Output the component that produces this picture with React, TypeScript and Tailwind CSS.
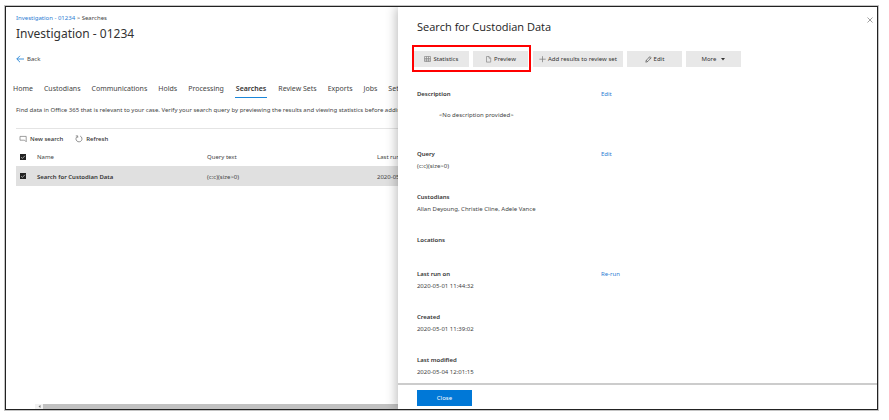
import type { ReactNode } from "react";

const tabs = [
  "Home",
  "Custodians",
  "Communications",
  "Holds",
  "Processing",
  "Searches",
  "Review Sets",
  "Exports",
  "Jobs",
  "Settings",
];

const stroke = { fill: "none", stroke: "currentColor", strokeWidth: 1 };

function BackIcon() {
  return (
    <svg className="size-2 text-[#2b88d8]" viewBox="0 0 8 8" {...stroke} strokeWidth={0.9} aria-hidden="true">
      <path d="M8 4H0.8M4 0.8L0.8 4L4 7.2" />
    </svg>
  );
}

function NewSearchIcon() {
  return (
    <svg className="size-2 text-[#777]" viewBox="0 0 8 8" {...stroke} strokeWidth={0.7} aria-hidden="true">
      <path d="M4.8 5.2H1V1.4H7.2V6.8L5.6 5.2H4.8" />
    </svg>
  );
}

function RefreshIcon() {
  return (
    <svg className="size-2 text-[#666]" viewBox="0 0 8 8" {...stroke} strokeWidth={0.7} aria-hidden="true">
      <path d="M5.2 1.1A3 3 0 1 1 2.4 1.3M0.8 0.9H2.7V2.8" />
    </svg>
  );
}

function StatisticsIcon() {
  return (
    <svg className="size-[7px] text-[#888]" viewBox="0 0 7 7" {...stroke} strokeWidth={0.7} aria-hidden="true">
      <path d="M0.5 0.5H6.5V5.5H0.5ZM0.5 2.5H6.5M0.5 4H6.5M2.5 0.5V5.5M4.5 0.5V5.5" />
    </svg>
  );
}

function PreviewIcon() {
  return (
    <svg className="size-[7px] text-[#888]" viewBox="0 0 7 7" {...stroke} strokeWidth={0.7} aria-hidden="true">
      <path d="M1.5 0.5H4L5.7 2.2V6.1H1.5ZM4 0.5V2.2H5.7" />
    </svg>
  );
}

function PlusIcon() {
  return (
    <svg className="size-[7px] text-[#777]" viewBox="0 0 7 7" {...stroke} strokeWidth={0.7} aria-hidden="true">
      <path d="M3.5 0.2V6.2M0.3 3.2H6.7" />
    </svg>
  );
}

function PencilIcon() {
  return (
    <svg className="size-[7px] text-[#555]" viewBox="0 0 7 7" {...stroke} strokeWidth={0.7} aria-hidden="true">
      <path d="M0.8 6.2L1.3 4.3L4.9 0.6L6.2 1.9L2.6 5.6ZM4.1 1.5L5.4 2.8M1.3 4.3L2.6 5.6" />
    </svg>
  );
}

function CaretIcon() {
  return (
    <svg className="ml-[3px] size-1 text-[#333]" viewBox="0 0 4 4" fill="currentColor" aria-hidden="true">
      <path d="M0 1H4L2 3.4Z" />
    </svg>
  );
}

function Check({ label }: { label: string }) {
  return (
    <span className="relative block size-[6px]">
      <input
        type="checkbox"
        defaultChecked
        aria-label={label}
        className="block size-[6px] appearance-none bg-[#222]"
      />
      <svg
        className="pointer-events-none absolute inset-0 size-[6px] text-white"
        viewBox="0 0 6 6"
        {...stroke}
        strokeWidth={0.6}
        aria-hidden="true"
      >
        <path d="M1.2 3.2L2.4 4.4L4.9 1.8" />
      </svg>
    </span>
  );
}

function ActionButton({ children, wide }: { children: ReactNode; wide?: boolean }) {
  return (
    <button
      type="button"
      className={`flex h-4 items-center justify-center gap-[2px] bg-[#e8e8e8] whitespace-nowrap text-[#333] ${
        wide ? "w-[90px]" : "w-[55px]"
      }`}
    >
      {children}
    </button>
  );
}

function Section({
  label,
  action,
  children,
  className = "",
}: {
  label: string;
  action?: string;
  children?: ReactNode;
  className?: string;
}) {
  return (
    <section className={className}>
      <div className="grid grid-cols-[2fr_3fr] leading-3">
        <h3 className="font-semibold text-[#333]">{label}</h3>
        {action && (
          <a href="#" className="justify-self-start text-[#2b7cd3]">
            {action}
          </a>
        )}
      </div>
      {children}
    </section>
  );
}

export default function App() {
  return (
    <div className="bg-white pt-[6px] pr-[11px] pb-[10px] pl-[5px] font-['Noto_Sans','Segoe_UI',sans-serif] text-[6px] text-[#444]">
      <div className="grid grid-cols-[9fr_11fr] border border-[#222] shadow-[0_0_0_1px_#c4c4c4]">
        <main className="flex min-w-0 flex-col overflow-hidden whitespace-nowrap">
          <div className="pl-[10px]">
            <nav aria-label="Breadcrumb" className="pt-[6px] leading-[10px]">
              <a href="#" className="text-[#2b7cd3]">
                Investigation - 01234
              </a>{" "}
              &gt; Searches
            </nav>
            <h1 className="pt-px text-[12px] leading-5 text-[#333]">Investigation - 01234</h1>
            <a href="#" className="mt-[9px] flex items-center gap-[3px] leading-3">
              <BackIcon />
              Back
            </a>
          </div>

          <nav aria-label="Case" className="mt-4 flex gap-[11px] pl-[7px] text-[7px]">
            {tabs.map((tab) => (
              <a
                key={tab}
                href="#"
                className={`border-b leading-[16px] ${
                  tab === "Searches"
                    ? "border-[#1a86d9] px-px font-semibold text-[#333]"
                    : "border-transparent"
                }`}
              >
                {tab}
              </a>
            ))}
          </nav>

          <div className="pl-[10px]">
            <p className="pt-[6px] leading-3">
              Find data in Office 365 that is relevant to your case. Verify your search query by previewing
              the results and viewing statistics before adding them to a review set.
            </p>
            <div className="mt-3 flex gap-3 border-t border-[#e4e4e4] pt-1 pl-[3px] font-medium text-[#333]">
              <button type="button" className="flex items-center gap-[3px] leading-3">
                <NewSearchIcon />
                New search
              </button>
              <button type="button" className="flex items-center gap-[3px] leading-3">
                <RefreshIcon />
                Refresh
              </button>
            </div>
            <table className="mt-[2px] w-[600px] table-fixed text-left">
              <colgroup>
                <col className="w-[21px]" />
                <col className="w-[170px]" />
                <col className="w-[170px]" />
                <col />
              </colgroup>
              <thead>
                <tr className="h-[19px]">
                  <th className="pl-1">
                    <Check label="Select all searches" />
                  </th>
                  <th className="pt-[2px] font-normal">Name</th>
                  <th className="pt-[2px] font-normal">Query text</th>
                  <th className="pt-[2px] font-normal">Last run on</th>
                </tr>
              </thead>
              <tbody>
                <tr className="h-5 bg-[#e0e0e0]">
                  <td className="pl-1">
                    <Check label="Select Search for Custodian Data" />
                  </td>
                  <td className="pt-[2px] font-semibold text-[#333]">Search for Custodian Data</td>
                  <td className="pt-[2px]">(c:c)(size&gt;0)</td>
                  <td className="pt-[2px]">2020-05-01 11:44:32</td>
                </tr>
              </tbody>
            </table>
          </div>

          <div className="mt-auto ml-[29px] flex h-[5px] bg-[#c1c1c1]" aria-hidden="true">
            <span className="flex w-2 items-center justify-center bg-[#f1f1f1]">
              <svg className="size-[3px] text-[#777]" viewBox="0 0 3 3" fill="currentColor">
                <path d="M2.5 0V3L0.5 1.5Z" />
              </svg>
            </span>
          </div>
        </main>

        <aside
          aria-label="Search for Custodian Data"
          className="z-10 flex flex-col bg-white shadow-[-2px_0_10px_rgba(0,0,0,0.25)] [clip-path:inset(0_0_0_-20px)]"
        >
          <header className="flex items-start justify-between pr-1 pl-[19px]">
            <h2 className="pt-[12px] font-['Open_Sans','Segoe_UI',sans-serif] text-[11px] leading-4 font-medium text-[#222]">
              Search for Custodian Data
            </h2>
            <button type="button" aria-label="Close panel" className="mt-[10px]">
              <svg className="size-[6px] text-[#777]" viewBox="0 0 6 6" {...stroke} strokeWidth={0.7}>
                <path d="M0.5 0.5L5.5 5.5M5.5 0.5L0.5 5.5" />
              </svg>
            </button>
          </header>

          <div className="flex gap-[2px] pt-[10px] pl-[14px]">
            <div className="flex gap-1 border-2 border-[#f00] pt-1 pr-px pb-[3px]">
              <ActionButton>
                <StatisticsIcon />
                Statistics
              </ActionButton>
              <ActionButton>
                <PreviewIcon />
                Preview
              </ActionButton>
            </div>
            <div className="flex gap-1 pt-[6px]">
              <ActionButton wide>
                <PlusIcon />
                Add results to review set
              </ActionButton>
              <ActionButton>
                <PencilIcon />
                Edit
              </ActionButton>
              <ActionButton>
                More
                <CaretIcon />
              </ActionButton>
            </div>
          </div>

          <div className="flex flex-col gap-[18px] pt-4 pb-1 pl-[19px] leading-[13px]">
            <Section label="Description" action="Edit" className="pb-2">
              <p className="pt-[9px] pl-[22px]">&lt;No description provided&gt;</p>
            </Section>
            <Section label="Query" action="Edit">
              <p>(c:c)(size&gt;0)</p>
            </Section>
            <Section label="Custodians">
              <p>Allan Deyoung, Christie Cline, Adele Vance</p>
            </Section>
            <Section label="Locations" className="pb-1" />
            <Section label="Last run on" action="Re-run">
              <p>2020-05-01 11:44:32</p>
            </Section>
            <Section label="Created">
              <p>2020-05-01 11:39:02</p>
            </Section>
            <Section label="Last modified">
              <p>2020-05-04 12:01:15</p>
            </Section>
          </div>

          <footer className="border-t-2 border-[#ccc] pt-[5px] pb-[3px] pl-[19px]">
            <button type="button" className="block h-4 w-[55px] bg-[#0078d7] text-white">
              Close
            </button>
          </footer>
        </aside>
      </div>
    </div>
  );
}
